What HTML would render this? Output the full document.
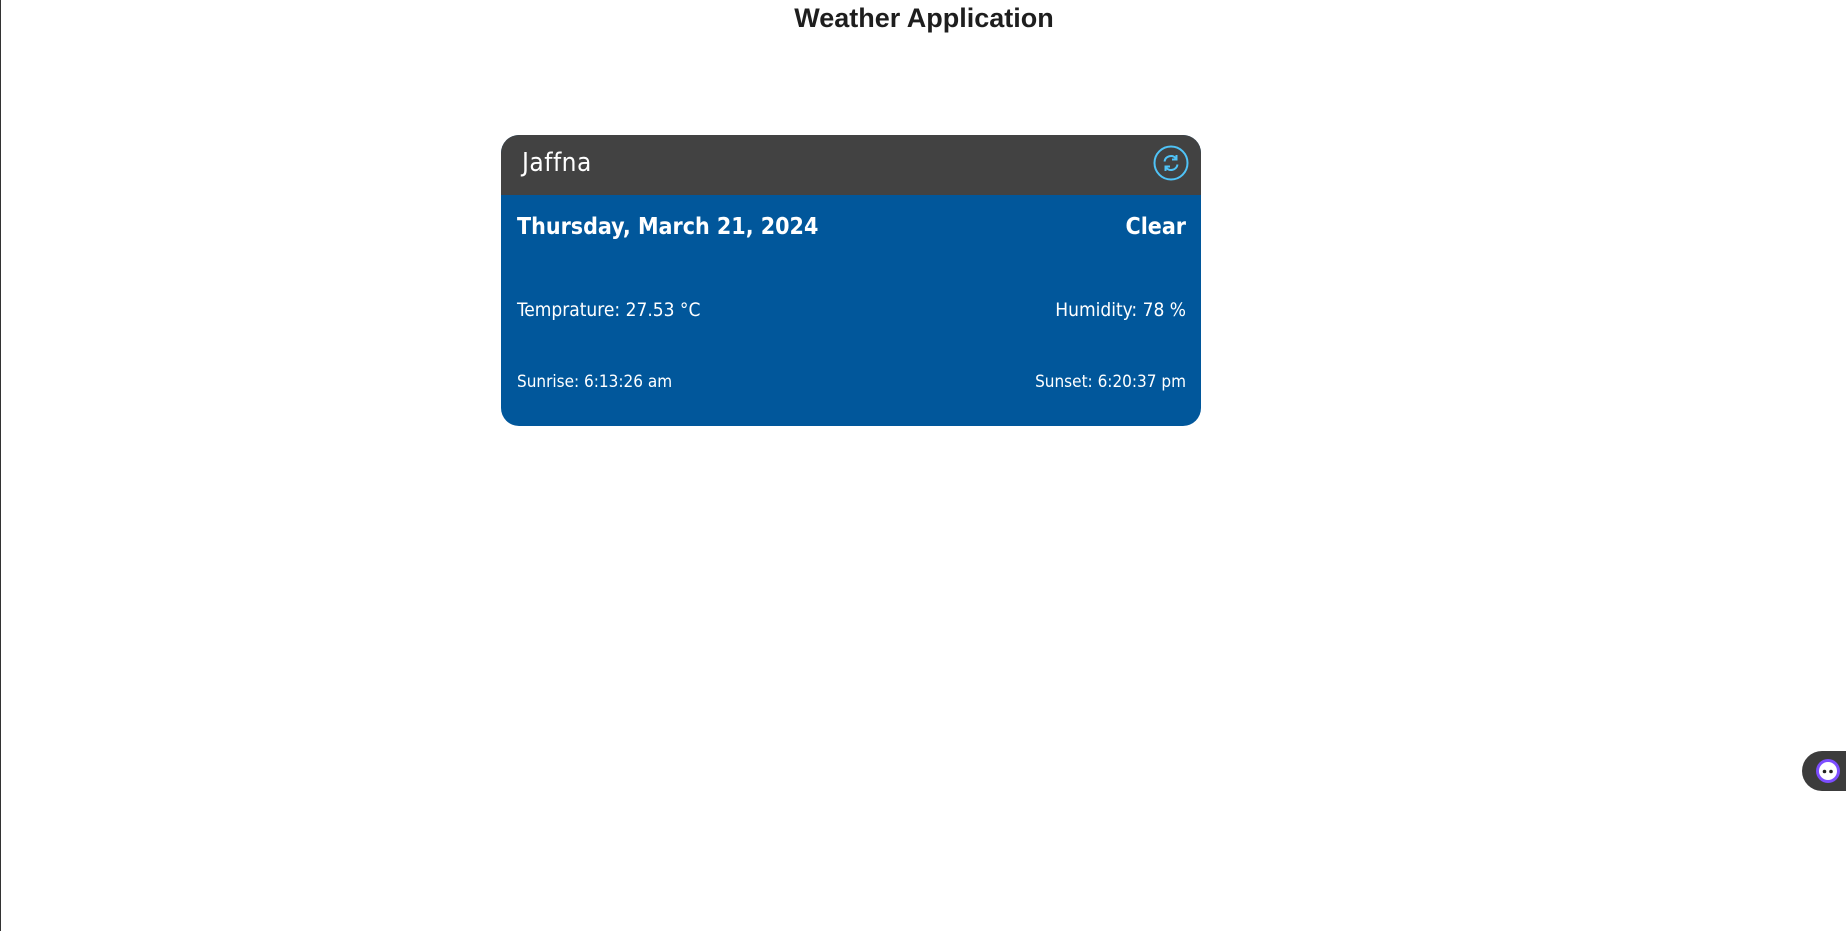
<!DOCTYPE html>
<html><head><meta charset="utf-8"><style>
html,body{margin:0;padding:0;width:1846px;height:931px;overflow:hidden;background:#fff;}
body{border-left:1px solid #333;box-sizing:border-box;position:relative;font-family:"Liberation Sans",sans-serif;}
h1{position:absolute;left:0;width:1846px;top:1px;margin:0;text-align:center;font-size:27px;font-weight:bold;color:#1e1e1e;line-height:34px;}
.card{position:absolute;left:500px;top:135px;width:700px;height:291px;border-radius:18px;overflow:hidden;background:#01579b;color:#fff;font-family:"Liberation Sans Narrow","DejaVu Sans Condensed","Liberation Sans",sans-serif;}
.hd{height:60px;background:#424242;position:relative;}
.hd .c{position:absolute;left:21px;top:13px;font-size:26px;letter-spacing:0.5px;}
.ic{position:absolute;left:652px;top:10px;}
.row{position:absolute;left:16px;right:15px;display:flex;justify-content:space-between;}
.r1{top:79px;font-size:23px;font-weight:bold;}
.r2{top:164px;font-size:19px;}
.r3{top:237px;font-size:17px;}
.w{position:absolute;left:1801px;top:751px;width:50px;height:40px;border-radius:20px 0 0 20px;background:#3c3c3c;}
</style></head><body>
<h1>Weather Application</h1>
<div class="card">
<div class="hd"><div class="c">Jaffna</div>
<svg class="ic" width="36" height="36" viewBox="0 0 36 36"><circle cx="18" cy="18" r="16.5" fill="none" stroke="#4fc3f7" stroke-width="2"/>
<path d="M11.5 16.5a6.5 6.5 0 0 1 11.5-3M24.5 19.5a6.5 6.5 0 0 1-11.5 3" fill="none" stroke="#4fc3f7" stroke-width="2"/>
<path d="M23.5 10v4.5h-4.5M12.5 26v-4.5h4.5" fill="none" stroke="#4fc3f7" stroke-width="2"/></svg></div>
<div class="row r1"><span>Thursday, March 21, 2024</span><span>Clear</span></div>
<div class="row r2"><span>Temprature: 27.53 °C</span><span>Humidity: 78 %</span></div>
<div class="row r3"><span>Sunrise: 6:13:26 am</span><span>Sunset: 6:20:37 pm</span></div>
</div>
<div class="w"><svg width="40" height="40" viewBox="0 0 40 40" style="position:absolute;left:4px;top:0"><circle cx="22" cy="20" r="12" fill="#7c4dff"/><circle cx="22" cy="20" r="9" fill="#fff"/><circle cx="18.5" cy="20.5" r="1.8" fill="#222"/><circle cx="25" cy="20.5" r="1.8" fill="#222"/></svg></div>
</body></html>
